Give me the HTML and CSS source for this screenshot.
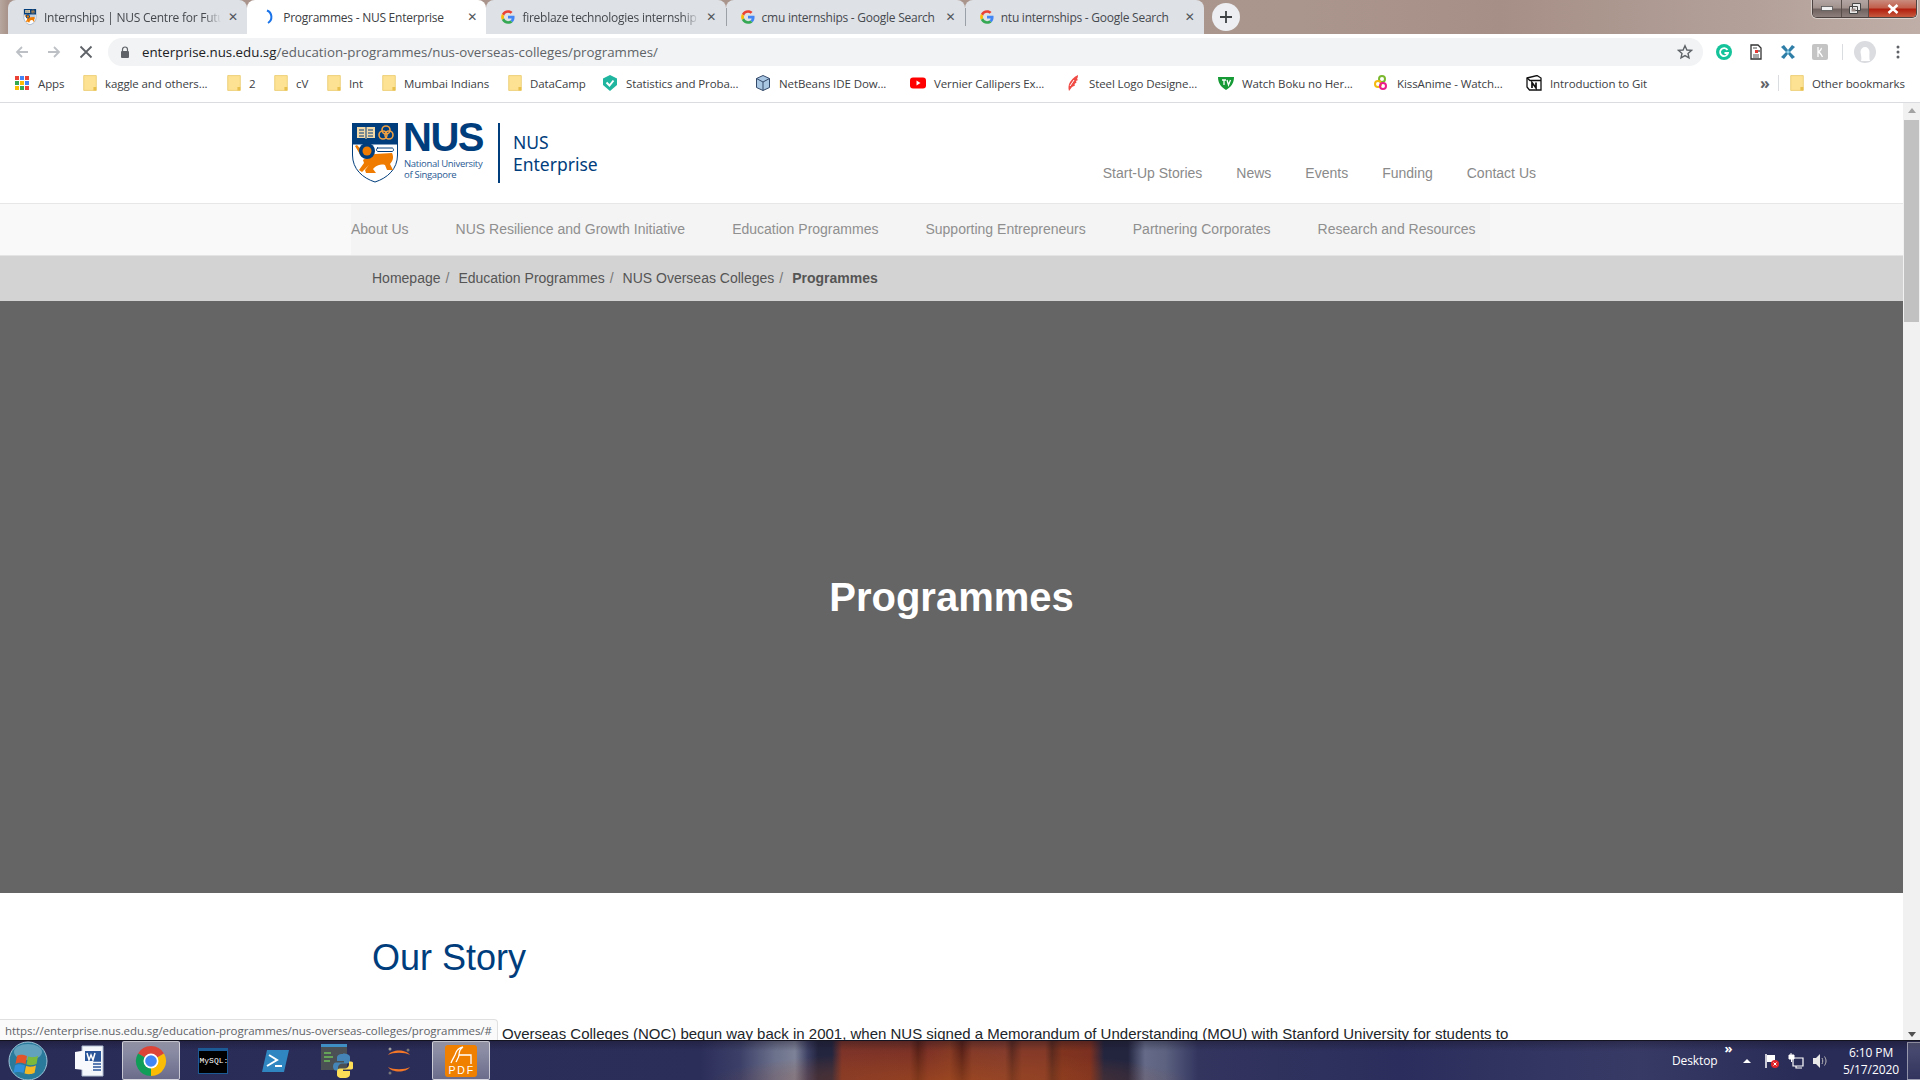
FILE: index.html
```html
<!DOCTYPE html>
<html lang="en">
<head>
<meta charset="utf-8">
<title>Programmes - NUS Enterprise</title>
<link rel="stylesheet" href="styles.css">
</head>
<body>
<svg class="defs" width="0" height="0" aria-hidden="true">
  <symbol id="g" viewBox="-4 -4 56 56">
    <path fill="#EA4335" d="M24 9.500c3.500 0 6.700 1.300 9.100 3.500l6.800-6.800C35.800 2.400 30.300 0 24 0 14.600 0 6.500 5.400 2.600 13.200l7.900 6.100C12.400 13.600 17.700 9.500 24 9.500z"/>
    <path fill="#4285F4" d="M46.900 24.500c0-1.600-.1-3.100-.4-4.500H24v9h12.900c-.6 3-2.200 5.500-4.700 7.200l7.700 6c4.400-4.100 7-10.200 7-17.700z"/>
    <path fill="#FBBC05" d="M10.500 28.700c-.5-1.400-.8-3-.8-4.700s.3-3.200.8-4.700l-7.900-6.100C1 16.500 0 20.100 0 24s1 7.500 2.600 10.800l7.900-6.100z"/>
    <path fill="#34A853" d="M24 48c6.500 0 11.900-2.100 15.900-5.800l-7.700-6c-2.200 1.400-4.900 2.300-8.200 2.300-6.300 0-11.600-4.200-13.500-9.800l-7.900 6.100C6.500 42.600 14.600 48 24 48z"/>
  </symbol>
  <symbol id="folder" viewBox="0 0 12 14">
    <path fill="#fde293" stroke="#e8c96a" stroke-width=".7" d="M.5.500h11v13H.5z"/>
    <path fill="#e8c04c" d="M9 10.500h2.500v3H9z"/>
  </symbol>
  <symbol id="shield" viewBox="0 0 46 60">
    <path fill="#003d7c" d="M0 0h46v22H0z"/>
    <path fill="#fff" stroke="#003d7c" stroke-width="1" d="M.5 21h45v11c0 14-10 23-22.500 27C10.500 55 .5 46 .5 32z"/>
    <path fill="#f3d9a8" d="M5 4h8l1 1 1-1h8v11h-8l-1 1-1-1H5z"/>
    <path stroke="#003d7c" stroke-width="1" d="M7 7h5M7 10h5M7 13h5M16 7h5M16 10h5M16 13h5M14 5v10"/>
    <g fill="none" stroke="#f0a040" stroke-width="1.600"><circle cx="34" cy="7" r="4"/><circle cx="31" cy="12" r="4"/><circle cx="37" cy="12" r="4"/></g>
    <path fill="#ef7c00" d="M3 23l2-1 7 8-3 3zM11 37c4-3 8-5 12-6l17-1c2 4 1 8-2 11l3 6h-6l-2-5c-4-1-7 0-10 2l-2 2 3 4H14l-1-3 4-5-7 7-3-2 5-7z"/>
    <circle cx="15" cy="28" r="8" fill="#003d7c"/>
    <circle cx="15" cy="28" r="4.500" fill="#ef7c00"/>
    <path fill="none" stroke="#003d7c" stroke-width="1" d="M25 25h15c2 0 2 3.500 0 3.500H26c-2 0-2-3.500 0-3.500z"/>
  </symbol>
</svg>

<div class="desktop">
  <header class="titlebar">
    <nav class="tabs">
      <div class="tab">
        <svg class="fav"><use href="#shield"/></svg>
        <span class="tab-title fade">Internships | NUS Centre for Future-ready Graduates</span>
        <span class="tab-x">✕</span>
      </div>
      <div class="tab active">
        <svg class="fav" viewBox="0 0 16 16"><path d="M6 1.500A7 7 0 0 1 7 14" fill="none" stroke="#1a73e8" stroke-width="2"/></svg>
        <span class="tab-title">Programmes - NUS Enterprise</span>
        <span class="tab-x">✕</span>
      </div>
      <div class="tab">
        <svg class="fav"><use href="#g"/></svg>
        <span class="tab-title fade">fireblaze technologies internship - Google Search</span>
        <span class="tab-x">✕</span>
      </div>
      <div class="tab sep">
        <svg class="fav"><use href="#g"/></svg>
        <span class="tab-title">cmu internships - Google Search</span>
        <span class="tab-x">✕</span>
      </div>
      <div class="tab sep">
        <svg class="fav"><use href="#g"/></svg>
        <span class="tab-title">ntu internships - Google Search</span>
        <span class="tab-x">✕</span>
      </div>
      <div class="newtab"><svg viewBox="0 0 12 12" width="12" height="12"><path d="M6 0v12M0 6h12" stroke="#3c4043" stroke-width="1.800"/></svg></div>
    </nav>
    <div class="winctl">
      <span class="win min"><svg viewBox="0 0 12 5" width="12" height="5"><rect x=".5" y=".5" width="11" height="4" fill="#f0f0f0" stroke="#555" stroke-width=".8"/></svg></span>
      <span class="win max"><svg viewBox="0 0 12 11" width="12" height="11"><path d="M3.500.500h8v7h-8zM.5 3.500h8v7h-8z" fill="#e8e8e8" stroke="#444" stroke-width="1"/><rect x="2.500" y="5.500" width="4" height="3" fill="#9a8a86"/></svg></span>
      <span class="win close"><svg viewBox="0 0 12 10" width="12" height="10"><path d="M1.500 1l9 8M10.500 1l-9 8" stroke="#fff" stroke-width="2.600"/></svg></span>
    </div>
  </header>

  <div class="toolbar">
    <svg class="tool-ic back" viewBox="0 0 16 16"><path d="M14 8H3M8 3L3 8l5 5" fill="none" stroke="#bdc1c6" stroke-width="1.800"/></svg>
    <svg class="tool-ic fwd" viewBox="0 0 16 16"><path d="M2 8h11M8 3l5 5-5 5" fill="none" stroke="#bdc1c6" stroke-width="1.800"/></svg>
    <svg class="tool-ic stop" viewBox="0 0 16 16"><path d="M2.500 2.500l11 11M13.500 2.500l-11 11" stroke="#5f6368" stroke-width="1.800"/></svg>
    <div class="omnibox">
      <svg class="lock" viewBox="0 0 10 12" width="10" height="12"><path d="M2.500 5V3.500a2.500 2.500 0 0 1 5 0V5" fill="none" stroke="#5f6368" stroke-width="1.200"/><rect x="1" y="5" width="8" height="7" rx="1" fill="#5f6368"/></svg>
      <span class="url"><b>enterprise.nus.edu.sg</b>/education-programmes/nus-overseas-colleges/programmes/</span>
      <svg class="star" viewBox="0 0 16 16" width="16" height="16"><path d="M8 1.800l1.900 4.200 4.500.4-3.400 3 1 4.500L8 11.600l-4 2.300 1-4.500-3.400-3 4.500-.4z" fill="none" stroke="#5f6368" stroke-width="1.400"/></svg>
    </div>
    <div class="exts">
      <svg class="ext" viewBox="0 0 16 16"><circle cx="8" cy="8" r="8" fill="#15c39a"/><path d="M11.500 6A4 4 0 1 0 12 9H8.500" fill="none" stroke="#fff" stroke-width="1.800"/></svg>
      <svg class="ext" viewBox="0 0 16 16"><path d="M3 1h7l3 3v11H3z" fill="#fff" stroke="#333" stroke-width="1.300"/><path d="M5 4h4M5 11h6M5 13h6" stroke="#555"/><rect x="7" y="6" width="3" height="3" fill="#e53935"/><rect x="10" y="6" width="2" height="2" fill="#888"/></svg>
      <svg class="ext" viewBox="0 0 16 16"><path d="M1 3l3-2 4 5 4-5 3 2-5 5 5 5-3 2-4-5-4 5-3-2 5-5z" fill="#2f7ea8"/><path d="M8 6l2 2-2 2-2-2z" fill="#8fd0ea"/></svg>
      <svg class="ext" viewBox="0 0 16 16"><rect width="16" height="16" rx="2" fill="#c4c4c4"/><path d="M6 3v10M6 8c2-1 4-3 3-4M6 8c2 0 3 2 4.500 5" fill="none" stroke="#fff" stroke-width="1.300"/></svg>
      <span class="tool-div"></span>
      <svg class="avatar" viewBox="0 0 22 22"><circle cx="11" cy="11" r="11" fill="#dadce0"/><path d="M7 20c1-3 0-5-.5-9a4.500 5 0 0 1 9 0c0 4-.5 6 .5 9z" fill="#fff"/></svg>
      <svg class="dots" viewBox="0 0 4 14" width="4" height="14"><circle cx="2" cy="2" r="1.500" fill="#5f6368"/><circle cx="2" cy="7" r="1.500" fill="#5f6368"/><circle cx="2" cy="12" r="1.500" fill="#5f6368"/></svg>
    </div>
  </div>

  <div class="bookmarks">
    <div class="bm"><svg class="bm-ic" viewBox="0 0 16 16"><g><rect x="1" y="1" width="4" height="4" fill="#ea4335"/><rect x="6" y="1" width="4" height="4" fill="#4285f4"/><rect x="11" y="1" width="4" height="4" fill="#ea4335"/><rect x="1" y="6" width="4" height="4" fill="#34a853"/><rect x="6" y="6" width="4" height="4" fill="#fbbc05"/><rect x="11" y="6" width="4" height="4" fill="#4285f4"/><rect x="1" y="11" width="4" height="4" fill="#fbbc05"/><rect x="6" y="11" width="4" height="4" fill="#34a853"/><rect x="11" y="11" width="4" height="4" fill="#ea4335"/></g></svg>Apps</div>
    <div class="bm"><svg class="bm-ic folder-ic"><use href="#folder"/></svg>kaggle and others...</div>
    <div class="bm"><svg class="bm-ic folder-ic"><use href="#folder"/></svg>2</div>
    <div class="bm"><svg class="bm-ic folder-ic"><use href="#folder"/></svg>cV</div>
    <div class="bm"><svg class="bm-ic folder-ic"><use href="#folder"/></svg>Int</div>
    <div class="bm"><svg class="bm-ic folder-ic"><use href="#folder"/></svg>Mumbai Indians</div>
    <div class="bm"><svg class="bm-ic folder-ic"><use href="#folder"/></svg>DataCamp</div>
    <div class="bm"><svg class="bm-ic" viewBox="0 0 16 16"><path d="M8 0l7 3.500V10l-7 6-7-6V3.500z" fill="#1fb59f"/><path d="M4.500 7.500L7.500 10.500l4-5" fill="none" stroke="#fff" stroke-width="2"/></svg>Statistics and Proba...</div>
    <div class="bm"><svg class="bm-ic" viewBox="0 0 16 16"><path d="M8 .5l6.500 3v9L8 15.500l-6.500-3v-9z" fill="#a9c6e2" stroke="#33496a"/><path d="M1.500 3.500L8 7l6.500-3.500M8 7v8.500" fill="none" stroke="#33496a"/></svg>NetBeans IDE Dow...</div>
    <div class="bm"><svg class="bm-ic" viewBox="0 0 16 16"><rect y="2.500" width="16" height="11" rx="3" fill="#f00"/><path d="M6.500 5.500v5l4-2.500z" fill="#fff"/></svg>Vernier Callipers Ex...</div>
    <div class="bm"><svg class="bm-ic" viewBox="0 0 16 16"><path d="M13 0c0 2-.5 3-1 4l1 1-2 1 .5 1.500L9.500 9 10 10.500 7 12l-3 4c-1-3-.5-6 .5-8s4-6 8.500-8z" fill="#f04a45"/><path d="M5 11l4-6" stroke="#fff"/></svg>Steel Logo Designe...</div>
    <div class="bm"><svg class="bm-ic" viewBox="0 0 16 16"><path d="M0 2h16c0 6-3 10-8 13C3 12 0 8 0 2z" fill="#159a35"/><path d="M4 5h4M6 5v5M9 5l1.500 5L12.500 5" fill="none" stroke="#fff" stroke-width="1.300"/></svg>Watch Boku no Her...</div>
    <div class="bm"><svg class="bm-ic" viewBox="0 0 16 16"><circle cx="9" cy="4" r="3" fill="none" stroke="#7cb82f" stroke-width="2"/><circle cx="5" cy="9" r="3" fill="none" stroke="#f2b90f" stroke-width="2"/><circle cx="10" cy="11" r="3" fill="none" stroke="#e91e8c" stroke-width="2"/></svg>KissAnime - Watch...</div>
    <div class="bm"><svg class="bm-ic" viewBox="0 0 16 16"><path d="M1 3l10-2.500 4 2.500v12H3.500L1 12z" fill="#fff" stroke="#111" stroke-width="1.300"/><path d="M1 3l3 2.500h11" fill="none" stroke="#111" stroke-width="1.300"/><path d="M6 13V7.500l4 5.500V7.500" fill="none" stroke="#111" stroke-width="1.700"/></svg>Introduction to Git</div>
    <div class="bm bm-more"><span class="chev">»</span><span class="bm-div"></span></div>
    <div class="bm"><svg class="bm-ic folder-ic"><use href="#folder"/></svg>Other bookmarks</div>
  </div>

  <div class="window">
    <main class="viewport">
      <div class="site-head">
        <div class="logo">
          <svg class="shield"><use href="#shield"/></svg>
          <div class="wordmark">
            <span class="nus">NUS</span>
            <span class="natl">National University<br>of Singapore</span>
          </div>
          <span class="logo-div"></span>
          <span class="ent">NUS<br>Enterprise</span>
        </div>
        <nav class="topnav">
          <a>Start-Up Stories</a><a>News</a><a>Events</a><a>Funding</a><a>Contact Us</a>
        </nav>
      </div>
      <nav class="mainnav">
        <a>About Us</a><a>NUS Resilience and Growth Initiative</a><a>Education Programmes</a><a>Supporting Entrepreneurs</a><a>Partnering Corporates</a><a>Research and Resources</a>
      </nav>
      <nav class="crumbs">
        <a>Homepage</a><i>/</i><a>Education Programmes</a><i>/</i><a>NUS Overseas Colleges</a><i>/</i><b>Programmes</b>
      </nav>
      <section class="hero"><h1>Programmes</h1></section>
      <section class="story">
        <h2>Our Story</h2>
        <p>Overseas Colleges (NOC) begun way back in 2001, when NUS signed a Memorandum of Understanding (MOU) with Stanford University for students to</p>
      </section>
      <div class="status">https://enterprise.nus.edu.sg/education-programmes/nus-overseas-colleges/programmes/#</div>
    </main>
    <aside class="scrollbar">
      <span class="arrow up"></span>
      <span class="thumb"></span>
      <span class="arrow down"></span>
    </aside>
  </div>

  <footer class="taskbar">
    <div class="start">
      <svg viewBox="0 0 40 40" width="40" height="40">
        <circle cx="20" cy="20" r="19" fill="#2a7a9c" stroke="#9fc6d8" stroke-width="1"/>
        <ellipse cx="20" cy="11" rx="14" ry="8" fill="#7ab4cc" opacity=".7"/>
        <path d="M9 15c4-2 6-1 10 0l-1.500 8c-4-1-6-2-10 0z" fill="#e4542a"/>
        <path d="M20 15.500c4 1 6 1 10-.5l-1.500 8c-4 1.500-6 1.500-10 .5z" fill="#7ab93c"/>
        <path d="M7 24.500c4-2 6-1 10 0L15.500 32c-4-1-6-1.500-10 0z" fill="#2f8fd9"/>
        <path d="M18 25c4 1 6 1 10-.5L26.500 32c-4 1.500-6 1.500-10 .5z" fill="#f5b822"/>
      </svg>
    </div>
    <div class="tb-btn">
      <svg viewBox="0 0 30 32" width="30" height="32"><path d="M8 1h21v30H8z" fill="#f3f6fb" stroke="#aebbd0"/><path d="M17 16h10M17 19h10M17 22h10M17 25h10" stroke="#2a5699" stroke-width="1.500"/><path d="M1 7l18-3v22L1 24z" fill="#f7f9fd"/><path d="M11 6h16v10H11z" fill="#2a5699"/><path d="M13 8l2 7 2-5 2 5 2-7" fill="none" stroke="#fff" stroke-width="1.500"/></svg>
    </div>
    <div class="tb-btn on">
      <svg viewBox="0 0 32 32" width="32" height="32"><path d="M16 16L3 8.500A15 15 0 0 1 29 8.500z" fill="#db4437"/><path d="M16 16L29 8.500A15 15 0 0 1 16 31z" fill="#fbbc05"/><path d="M16 16L16 31A15 15 0 0 1 3 8.500z" fill="#0f9d58"/><circle cx="16" cy="16" r="7.500" fill="#fff"/><circle cx="16" cy="16" r="5.800" fill="#4285f4"/></svg>
    </div>
    <div class="tb-btn">
      <svg viewBox="0 0 30 26" width="30" height="26"><rect width="30" height="26" fill="#1c5a96"/><rect x="1" y="3" width="28" height="22" fill="#000"/><text x="1.500" y="15" class="mysql">MySQL:</text></svg>
    </div>
    <div class="tb-btn">
      <svg viewBox="0 0 28 24" width="28" height="24"><path d="M6 1h22l-5 22H1z" fill="#2f86c1"/><path d="M8 6l8 5-10 6" fill="none" stroke="#fff" stroke-width="2"/><path d="M14 17h7" stroke="#fff" stroke-width="2"/></svg>
    </div>
    <div class="tb-btn">
      <svg viewBox="0 0 32 34" width="32" height="34"><rect y="0" width="26" height="26" fill="#4a5054"/><rect y="0" width="26" height="3" fill="#3f8fc4"/><path d="M3 9h7M3 13h9M3 17h6" stroke="#6fbf5a" stroke-width="1.300"/><path d="M22 10c-5 0-6 2-6 4v3h7v1.500h-8c-2 0-3 2-3 4s1 4 3 4h2v-3c0-2 2-4 4-4h5c2 0 3-1 3-3v-3.500c0-2-3-3.500-7-3.500z" fill="#4584b6"/><path d="M23 34c5 0 6-2 6-4v-3h-7v-1.500h8c2 0 3-2 3-4s-1-4-3-4h-2v3c0 2-2 4-4 4h-5c-2 0-3 1-3 3v3.500c0 2 3 3.500 7 3.500z" fill="#ffde57"/></svg>
    </div>
    <div class="tb-btn">
      <svg viewBox="0 0 28 32" width="28" height="32"><path d="M3 10c4-6 18-6 22 0-5-3-17-3-22 0zM3 22c4 6 18 6 22 0-5 3-17 3-22 0z" fill="#f37726"/><circle cx="5" cy="4" r="1.500" fill="#9e9e9e"/><circle cx="23" cy="5" r="1.500" fill="#777"/><circle cx="5" cy="28" r="1.500" fill="#777"/></svg>
    </div>
    <div class="tb-btn on">
      <svg viewBox="0 0 32 32" width="32" height="32"><rect width="32" height="32" rx="3" fill="#f08000"/><path d="M18 2c-6 1-7 5-8 8-1 2-3 5-4 8M18 2c-3 2-4 5-4 8 0 2-2 5-3 7M14 10h12v9" fill="none" stroke="#fff" stroke-width="1.300"/><text x="3.500" y="29" class="pdf">PDF</text></svg>
    </div>
    <div class="tray">
      <div class="tray-desk"><span>Desktop</span><span class="tray-chev">»</span></div>
      <span class="tray-up"></span>
      <svg class="tray-ic" viewBox="0 0 16 16"><path d="M2 1v14" stroke="#fff" stroke-width="1.500"/><path d="M3 2h8v7H3z" fill="#fff"/><circle cx="11" cy="11" r="4" fill="#e0242a"/><path d="M9.500 9.500l3 3M12.500 9.500l-3 3" stroke="#fff"/></svg>
      <svg class="tray-ic" viewBox="0 0 16 16"><path d="M5 5h10v8H5zM8 13v2h6" fill="none" stroke="#fff" stroke-width="1.200"/><path d="M1 2h5v4H1zM3 0v2M3.500 6v3" fill="#fff" stroke="#fff"/></svg>
      <svg class="tray-ic" viewBox="0 0 16 16"><path d="M1 5h3l4-4v14l-4-4H1z" fill="#e8e8e8"/><path d="M10 5c1 2 1 4 0 6M12.500 3.500c2 3 2 6 0 9" fill="none" stroke="#bbb"/></svg>
      <div class="clock"><span>6:10 PM</span><span>5/17/2020</span></div>
      <span class="showdesk"></span>
    </div>
  </footer>
</div>
</body>
</html>
```

FILE: styles.css
```css
* { box-sizing: border-box; }
html, body { margin: 0; height: 100%; overflow: hidden; }
body { font-family: "Liberation Sans", Arial, sans-serif; background: #fff; }
.defs { position: absolute; }
.desktop { width: 1920px; height: 1080px; display: flex; flex-direction: column; overflow: hidden; }
a { color: inherit; text-decoration: none; }

/* title bar and tabs */
.titlebar {
  height: 34px; flex: none; display: flex; justify-content: space-between;
  background: linear-gradient(90deg, #b7a79e 0, #a89289 8px, #ab968e 1300px, #a68f87 1500px, #b3a199 1750px, #bfaea7 1920px);
}
.tabs { display: flex; padding-left: 8px; font: 12px "Open Sans", "Noto Sans", sans-serif; }
.tab {
  width: 239.200px; height: 34px; display: flex; align-items: center; position: relative;
  padding-left: 14px; background: #dee1e6; color: #45494e; border-radius: 8px 8px 0 0;
}
.tab.active { background: #fff; color: #3c4043; }
.tab.sep::before { content: ""; position: absolute; left: 0; top: 8px; bottom: 8px; width: 1px; background: #9aa0a6; }
.fav { width: 16px; height: 16px; flex: none; }
.tab-title { width: 189px; padding-left: 6px; white-space: nowrap; overflow: hidden; letter-spacing: -.25px; }
.tab-title.fade { -webkit-mask-image: linear-gradient(90deg, #000 88%, transparent 97%); mask-image: linear-gradient(90deg, #000 88%, transparent 97%); }
.tab-x { width: 12px; font-size: 12px; font-family: "DejaVu Sans", sans-serif; font-weight: 700; color: #50545a; text-align: center; }
.newtab { width: 28px; height: 28px; margin: 3px 0 0 8px; border-radius: 50%; background: #eceef1; display: flex; align-items: center; justify-content: center; }
.winctl { display: flex; height: 18px; margin-right: 3px; border: 1px solid #4d4340; border-top: 0; border-radius: 0 0 5px 5px; overflow: hidden; box-shadow: 0 0 0 1px rgba(255,255,255,.45); }
.win { display: flex; align-items: center; justify-content: center; background: linear-gradient(#b3a6a2 0, #a2928e 45%, #6f625f 55%, #8d807c 100%); border-right: 1px solid #5a4e4b; }
.win.min { width: 29px; }
.win.max { width: 27px; }
.win.close { width: 47px; border: 0; background: linear-gradient(#c98b7e 0, #c2604c 45%, #b2200e 55%, #c65a40 100%); }

/* toolbar */
.toolbar { height: 36px; flex: none; background: #fff; display: flex; align-items: center; padding-left: 14px; }
.tool-ic { width: 16px; height: 16px; flex: none; margin-right: 16px; }
.omnibox { width: 1595px; height: 28px; margin-left: -2px; border-radius: 14px; background: #f1f3f4; display: flex; align-items: center; padding: 0 10px 0 12px; }
.lock { flex: none; }
.url { flex: 1; margin-left: 12px; font: 13.300px "Open Sans", "Noto Sans", sans-serif; color: #5f6368; white-space: nowrap; }
.url b { font-weight: 400; color: #202124; }
.exts { display: flex; align-items: center; padding-left: 13px; }
.ext { width: 16px; height: 16px; margin-right: 16px; flex: none; }
.tool-div { width: 1px; height: 16px; background: #dadce0; margin: 0 11px 0 -2px; }
.avatar { width: 22px; height: 22px; flex: none; }
.dots { margin-left: 20px; }

/* bookmarks */
.bookmarks {
  height: 33px; flex: none; background: #fff; border-bottom: 1px solid #dadce0;
  display: grid; grid-template-columns: 69px 144px 47px 53px 55px 126px 94px 153px 155px 155px 153px 155px 153px 234px 30px 1fr;
  padding: 0 0 6px 14px; align-items: center;
  font: 11.500px "Open Sans", "Noto Sans", sans-serif; color: #3c4043; letter-spacing: -.1px;
}
.bm { display: flex; align-items: center; white-space: nowrap; overflow: hidden; height: 22px; }
.bm-ic { width: 16px; height: 16px; flex: none; margin-right: 8px; }
.folder-ic { width: 14px; margin-right: 8px; }
.bm-more { color: #5f6368; }
.chev { font-size: 16px; line-height: 22px; width: 18px; font-weight: 700; }
.bm-div { width: 1px; height: 16px; background: #dadce0; }

/* page */
.window { flex: 1; min-height: 0; display: flex; }
.viewport { flex: 1; position: relative; overflow: hidden; background: #fff; }
.site-head { height: 100px; display: flex; justify-content: space-between; align-items: flex-end; width: 1184px; margin-left: 352px; padding-bottom: 22px; }
.logo { display: flex; align-self: flex-start; margin-top: 20px; color: #003d7c; }
.shield { width: 46px; height: 60px; flex: none; }
.wordmark { display: flex; flex-direction: column; margin-left: 6px; width: 94px; }
.nus { font: 700 40px/29px "Liberation Sans", sans-serif; letter-spacing: -1.500px; margin-left: -1px; }
.natl { font: 9.500px/11px "Open Sans", sans-serif; margin-top: 6px; color: #2a5a93; white-space: nowrap; letter-spacing: -.3px; }
.logo-div { width: 2px; height: 60px; background: #003d7c; }
.ent { font: 17.500px/22px "Noto Sans", "Open Sans", sans-serif; margin: 8px 0 0 13px; white-space: nowrap; }
.topnav { display: flex; gap: 34px; font-size: 14px; color: #8a8a8a; }
.mainnav { height: 53px; display: flex; align-items: center; gap: 47px; padding: 0 0 2px 351px; font-size: 14px; color: #8f8f8f; background: linear-gradient(90deg, #f9f9f9 351px, #f4f4f4 351px, #f4f4f4 1490px, #f7f7f7 1490px); border-top: 1px solid #e7e7e7; border-bottom: 1px solid #e4e4e4; }
.crumbs { height: 45px; display: flex; align-items: center; padding: 0 0 2px 372px; background: #d3d3d3; font-size: 14px; color: #555; }
.crumbs i { font-style: normal; margin: 0 9px 0 5px; color: #777; }
.hero { height: 592px; background: #656565; display: flex; align-items: center; justify-content: center; }
.hero h1 { margin: 0; font-size: 40px; font-weight: 700; color: #fff; }
.story { padding: 43px 0 0 372px; }
.story h2 { margin: 0; font-size: 36px; font-weight: 400; line-height: 44px; color: #003d7c; }
.story p { margin: 42px 0 0; padding-left: 130px; font-size: 15px; line-height: 24px; color: #212529; white-space: nowrap; }
.status { position: absolute; left: 0; bottom: 0; width: 498px; height: 21px; padding: 3px 0 0 5px; background: #fafafa; border: 1px solid #e0e0e0; border-left: 0; border-bottom: 0; border-radius: 0 4px 0 0; font: 11.500px "Open Sans", sans-serif; color: #5f6368; white-space: nowrap; letter-spacing: -.07px; }

/* scrollbar */
.scrollbar { width: 17px; flex: none; background: #f1f1f1; display: flex; flex-direction: column; align-items: center; padding: 5px 0 3px; }
.arrow { width: 0; height: 0; border-left: 4px solid transparent; border-right: 4px solid transparent; flex: none; }
.arrow.up { border-bottom: 5px solid #a3a3a3; }
.arrow.down { border-top: 5px solid #505050; margin-top: auto; }
.thumb { width: 15px; height: 202px; margin-top: 7px; background: #c1c1c1; flex: none; }

/* taskbar */
.taskbar {
  height: 40px; flex: none; display: flex; align-items: center; color: #fff; border-top: 1px solid #141420;
  background:
    linear-gradient(180deg, rgba(20,15,30,.35), rgba(255,255,255,0) 10px),
    radial-gradient(ellipse 240px 30px at 950px 40px, rgba(170,80,30,.55), rgba(170,80,30,0)),
    linear-gradient(90deg, #2a2c58 0, #2c2e5a 700px, #3c4068 740px, #6c718c 775px, #7d8298 795px, #3c3f62 808px, #23253f 818px, #23253f 832px, #7e3428 842px, #7c3226 910px, #5a2218 918px, #7e3226 928px, #863a24 950px, #5a2218 962px, #843a28 972px, #853c2c 1005px, #5d2a20 1012px, #853a28 1022px, #853a28 1045px, #5c2a1e 1052px, #80341f 1062px, #7c3020 1090px, #23253f 1104px, #23253f 1128px, #646a88 1145px, #5c6280 1165px, #33355f 1198px, #2b2d5c 1400px, #383a66 1640px, #2a2c58 1800px);
}
.start { width: 58px; display: flex; justify-content: center; flex: none; padding-right: 3px; }
.tb-btn { width: 62px; height: 39px; flex: none; display: flex; align-items: center; justify-content: center; }
.tb-btn.on { width: 58px; margin: 0 2px; background: linear-gradient(180deg, rgba(255,255,255,.5), rgba(255,255,255,.3)); border: 1px solid rgba(255,255,255,.6); border-radius: 2px; }
.tb-btn:last-of-type { background: linear-gradient(180deg, rgba(255,255,255,.22), rgba(255,255,255,.1)); }
.mysql { font: 8px "Liberation Mono", monospace; fill: #fff; }
.pdf { font: 10.500px "Liberation Sans", sans-serif; fill: #fff; letter-spacing: 1.800px; }
.tray { flex: 1; display: flex; align-items: center; padding-left: 1180px; }
.tray-desk { display: flex; width: 71px; flex: none; font: 12px "Open Sans", sans-serif; letter-spacing: -.1px; }
.tray-chev { margin: -10px 0 0 7px; font-size: 13px; font-weight: 700; line-height: 1; }
.tray-up { width: 0; height: 0; border-left: 4px solid transparent; border-right: 4px solid transparent; border-bottom: 4px solid #fff; margin-right: 13px; flex: none; }
.tray-ic { width: 16px; height: 16px; margin-right: 8px; flex: none; }
.clock { width: 72px; margin-left: -1px; flex: none; display: flex; flex-direction: column; align-items: center; font: 12px/17px "Open Sans", sans-serif; letter-spacing: -.1px; }
.showdesk { width: 15px; height: 38px; margin-left: auto; flex: none; border: 1px solid rgba(255,255,255,.45); background: linear-gradient(180deg, rgba(255,255,255,.16), rgba(255,255,255,.04)); }
```
